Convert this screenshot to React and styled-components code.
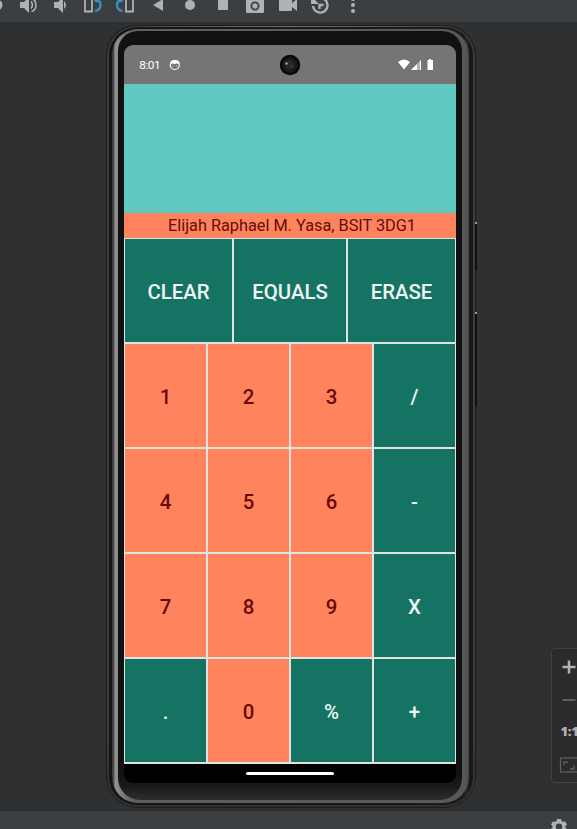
import React from "react";
import styled, { createGlobalStyle } from "styled-components";

const Global = createGlobalStyle`
  * { box-sizing: border-box; }
  body { margin: 0; background: #2f3032; font-family: Roboto, sans-serif; overflow: hidden; }
`;

const Emulator = styled.div`
  position: relative;
  width: 577px;
  height: 829px;
  overflow: hidden;
  background: #2f3032;
  display: flex;
  flex-direction: column;
`;

const Toolbar = styled.header`
  height: 22px;
  flex: none;
  background: #3c3f41;
  svg { display: block; }
`;

const Stage = styled.main`
  flex: 1;
  padding: 3px 0 0 106px;
`;

const Footer = styled.footer`
  height: 18px;
  flex: none;
  background: #3c3f41;
  border-top: 1px solid #393c3e;
  padding: 7px 0 0 550px;
  svg { display: block; }
`;

const Phone = styled.div`
  position: relative;
  width: 370px;
  height: 783px;
  padding: 1px;
  border-radius: 31px 31px 32px 32px;
  background: #1b1b1b;
`;

const Rail = styled.div`
  height: 100%;
  padding: 1px 2px 2px;
  border-radius: 30px;
  background: linear-gradient(180deg, transparent 700px, #303030 776px), linear-gradient(90deg, #3d3d3d, #747474 50%, #3d3d3d);
`;

const Groove = styled.div`
  height: 100%;
  padding: 2px 4px 2px 3px;
  border-radius: 28px;
  background: linear-gradient(90deg, #151515 2px, #1b1b1b 355px, #2b2b2b 358px, #181818 360px);
`;

const Edge = styled.div`
  height: 100%;
  padding: 2px 7px 3px 6px;
  border-radius: 26px;
  background: linear-gradient(90deg, #333 0, #555 2px, #8e8e8e 3px, #8e8e8e 5px, #606060 20px, #585858 335px, #585858 353px, #484848 357px);
`;

const Bezel = styled.div`
  height: 100%;
  padding: 14px 6px 0;
  border-radius: 20px 20px 22px 22px;
  background: linear-gradient(#111 0, #111 740px, #1a1a1a 755px, #2c2c2c 768px);
`;

const Screen = styled.div`
  width: 332px;
  height: 738px;
  overflow: hidden;
  border-radius: 9px;
  background: #000;
  display: flex;
  flex-direction: column;
`;

const StatusBar = styled.div`
  height: 39px;
  flex: none;
  background: #757575;
  color: #fff;
  svg { display: block; }
`;

const Display = styled.div`
  height: 129px;
  flex: none;
  background: #60cac2;
`;

const NameBar = styled.div`
  height: 25px;
  flex: none;
  background: #ff845d;
  color: #680b08;
  font-size: 16.3px;
  line-height: 25px;
  text-align: center;
  white-space: nowrap;
  padding-left: 4px;
`;

const Keypad = styled.div`
  height: 526px;
  flex: none;
  background: #dfe3e2;
  padding: 1px 1px 2px;
  display: grid;
  grid-template-rows: repeat(5, 103px);
  row-gap: 2px;
`;

const KeyRow = styled.div`
  display: grid;
  grid-template-columns: ${(p) => (p.$wide ? "107px 112px 107px" : "repeat(4, 81px)")};
  column-gap: 2px;
`;

const Key = styled.button`
  border: 0;
  padding: 2px 0 0;
  display: flex;
  align-items: center;
  justify-content: center;
  font: 500 20.4px Roboto, sans-serif;
  background: ${(p) => (p.$number ? "#ff845d" : "#157364")};
  color: ${(p) => (p.$number ? "#680b08" : "#f0f5f3")};
`;

const NavBar = styled.div`
  flex: 1;
  display: flex;
  justify-content: center;
  padding-top: 8px;
`;

const HomeHandle = styled.div`
  width: 88px;
  height: 3px;
  border-radius: 2px;
  background: #fff;
`;

const SideButton = styled.div`
  position: absolute;
  left: 369px;
  top: ${(p) => p.$top}px;
  width: 2px;
  height: ${(p) => p.$length}px;
  background: #101010;
  border-top: 2px solid #999;
`;

const ZoomPanel = styled.aside`
  position: absolute;
  left: 551px;
  top: 648px;
  width: 40px;
  height: 135px;
  border: 1px solid #404244;
  border-radius: 4px;
  background: #2b2b2b;
  svg { display: block; }
`;

const ToolbarIcons = () => (
  <svg width="577" height="22" fill="#afb1b3">
    <circle cx="-3" cy="5" r="5.5" />
    <path d="M20 2h4l5-5v16l-5-5h-4z" />
    <path d="M31 1.500q3 3.500 0 7M31.500-1.500c6 2 6 11 0 13" fill="none" stroke="#afb1b3" strokeWidth="1.600" />
    <path d="M54 2h4l5-5v16l-5-5h-4zM64 1q4 4 0 8z" />
    <path d="M85-4h7v15.500h-7zM126-4h7v15.500h-7z" fill="none" stroke="#afb1b3" strokeWidth="1.800" />
    <path d="M95 0q5.500 0 5.500 5t-5.500 6M122.500 0q-5.500 0-5.500 5t5.500 6" fill="none" stroke="#3592c4" strokeWidth="2.400" />
    <path d="M97-2v5l-3-2.500zM120.500-2v5l3-2.500z" fill="#3592c4" />
    <path d="M153 5l10-6v12z" />
    <circle cx="190" cy="5" r="5" />
    <rect x="218" y="-1" width="10" height="11" rx=".5" />
    <path fillRule="evenodd" d="M246 0h4l2-2h6l2 2h4v12q0 1-1 1h-16q-1 0-1-1zM255 1.500a4.500 4.500 0 100 9 4.500 4.500 0 000-9z" />
    <circle cx="255" cy="6" r="2.700" />
    <path d="M280-1h11q1 0 1 1v3l5-4v12l-5-4v3q0 1-1 1h-11q-1 0-1-1V0z" />
    <path d="M313 6a7.300 7.300 0 1011-7M319.500 9V5h4" fill="none" stroke="#afb1b3" strokeWidth="2.300" />
    <path d="M311-4v8h8z" />
    <circle cx="353" cy="-1" r="2" /><circle cx="353" cy="5" r="2" /><circle cx="353" cy="11" r="2" />
  </svg>
);

const StatusIcons = () => (
  <svg width="332" height="39" fill="#fff">
    <text x="15.200" y="24" fontSize="11.800" fontFamily="Roboto, sans-serif" textLength="21.500">8:01</text>
    <circle cx="50.800" cy="20" r="4.500" fill="none" stroke="#fff" strokeWidth="1.200" />
    <path d="M46 19q0-4 4.800-4t4.800 4l-3-.5-2 .8-2-.8z" />
    <circle cx="49" cy="21" r=".5" /><circle cx="52.500" cy="21" r=".5" />
    <circle cx="166" cy="20" r="10.200" fill="#080909" />
    <circle cx="166" cy="20" r="7.500" fill="#191b1d" />
    <circle cx="165.500" cy="19.500" r="4.500" fill="#25292d" />
    <circle cx="162.500" cy="18.500" r="1.300" fill="#8c9da2" />
    <circle cx="168.300" cy="21.300" r="1.300" fill="#263f66" />
    <path d="M274 17q6-5 12 0l-6 7.500z" />
    <path d="M287 25l10-10v10z" opacity=".45" />
    <path d="M287 25l6-6v6zM296 15.500h1V25h-1z" />
    <path d="M303.500 15h1.500v-1h2v1h2v10h-5.500z" />
  </svg>
);

const ZoomIcons = () => (
  <svg width="26" height="133" fill="none">
    <path d="M10.500 18h13M17 11.500v13" stroke="#afb1b3" strokeWidth="2.500" />
    <path d="M10.500 51h13" stroke="#5d5f60" strokeWidth="2" />
    <text x="8.500" y="87" fill="#afb1b3" fontFamily="Open Sans, sans-serif" fontSize="13" fontWeight="800" letterSpacing="-.3">1:1</text>
    <rect x="8.500" y="109" width="18" height="14" stroke="#5d5f60" strokeWidth="1.300" />
    <path d="M12 116v-3h4M22 116v4h-4" stroke="#5d5f60" strokeWidth="1.300" />
  </svg>
);

const GearIcon = () => (
  <svg width="18" height="16" viewBox="0 0 18 16">
    <path fillRule="evenodd" fill="#afb1b3" d="M7 0h4l.5 2 1.600.9L15 2.200l2 3.300L15.500 7v1.500L17 10l-2 3.300-2-.6-1.500.9-.5 2H7l-.5-2-1.600-.9-2 .6L1 10l1.500-1.500V7L1 5.500l2-3.300 2 .7L6.500 2zM9 4.500a3.200 3.200 0 100 6.400 3.200 3.200 0 000-6.400z" />
  </svg>
);

const numberRows = [
  ["1", "2", "3", "/"],
  ["4", "5", "6", "-"],
  ["7", "8", "9", "X"],
  [".", "0", "%", "+"],
];

export default function App() {
  return (
    <>
      <Global />
      <Emulator>
        <Toolbar><ToolbarIcons /></Toolbar>
        <Stage>
          <Phone>
            <Rail><Groove><Edge><Bezel>
              <Screen>
                <StatusBar><StatusIcons /></StatusBar>
                <Display />
                <NameBar>Elijah Raphael M. Yasa, BSIT 3DG1</NameBar>
                <Keypad>
                  <KeyRow $wide>
                    {["CLEAR", "EQUALS", "ERASE"].map((k) => <Key key={k}>{k}</Key>)}
                  </KeyRow>
                  {numberRows.map((row) => (
                    <KeyRow key={row[0]}>
                      {row.map((k) => <Key key={k} $number={/\d/.test(k)}>{k}</Key>)}
                    </KeyRow>
                  ))}
                </Keypad>
                <NavBar><HomeHandle /></NavBar>
              </Screen>
            </Bezel></Edge></Groove></Rail>
            <SideButton $top={197} $length={48} />
            <SideButton $top={287} $length={95} />
          </Phone>
        </Stage>
        <Footer><GearIcon /></Footer>
        <ZoomPanel><ZoomIcons /></ZoomPanel>
      </Emulator>
    </>
  );
}
